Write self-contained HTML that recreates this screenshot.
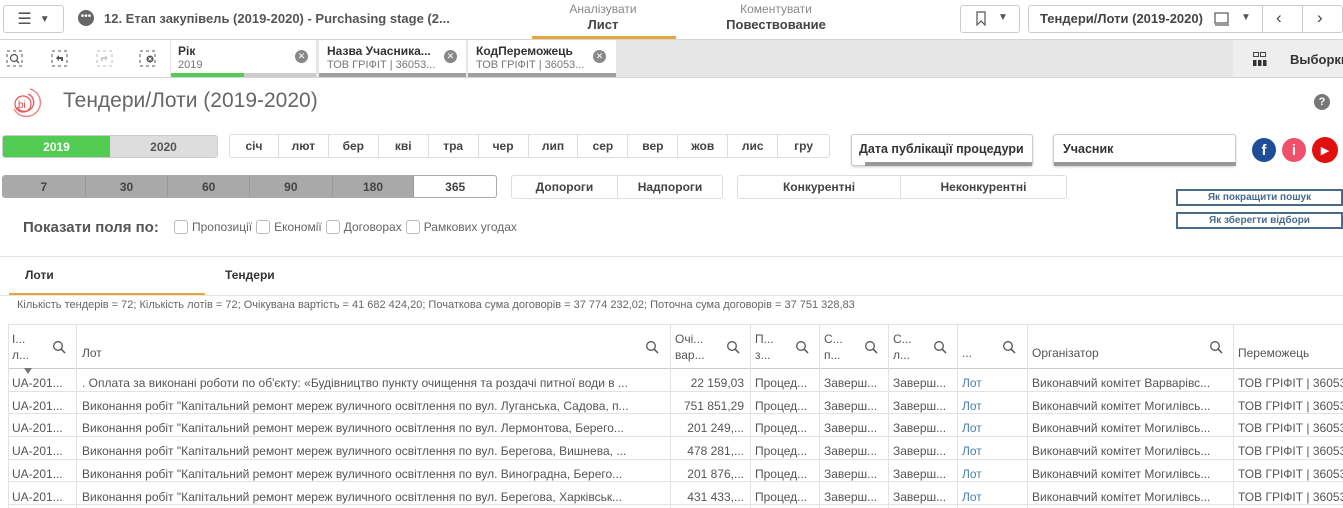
<!DOCTYPE html>
<html><head><meta charset="utf-8"><style>
*{box-sizing:border-box;margin:0;padding:0}
body{width:1343px;height:508px;overflow:hidden;background:#fff;font-family:"Liberation Sans","DejaVu Sans",sans-serif;color:#333;position:relative;font-size:12px}
.a{position:absolute}
.btn{position:absolute;border:1px solid #ccc;border-radius:3px;background:#fff}
.c{display:flex;align-items:center;justify-content:center}
.seg{position:absolute;display:flex;border:1px solid #ddd;border-radius:3px;overflow:hidden}
.seg div{display:flex;align-items:center;justify-content:center;border-right:1px solid #ddd;font-weight:bold;font-size:12px;color:#444;height:100%}
.seg div:last-child{border-right:none}
.cell{position:absolute;font-size:12px;color:#555;white-space:nowrap;overflow:hidden}
.vl{position:absolute;width:1px;background:#e2e2e2}
.hl{position:absolute;height:1px;background:#e2e2e2;left:8px;right:0}
.cb{display:inline-block;width:14px;height:14px;border:1px solid #bbb;border-radius:3px;vertical-align:-3px;margin:0 4px 0 4px}
.mg{position:absolute;width:14px;height:14px}
</style></head><body>
<svg width="0" height="0" style="position:absolute"><defs><symbol id="mg" viewBox="0 0 14 14"><circle cx="6" cy="6" r="4.3" fill="none" stroke="#555" stroke-width="1.3"/><line x1="9.2" y1="9.2" x2="13" y2="13" stroke="#555" stroke-width="1.5"/></symbol></defs></svg>
<!-- top bar -->
<div class="btn c" style="left:3px;top:5px;width:61px;height:28px;font-size:16px;color:#555">☰ <span style="font-size:10px;margin-left:8px">▼</span></div>
<div class="a" style="left:78px;top:10px;width:16px;height:16px;border-radius:8px;background:#666;color:#fff;font-size:10px;line-height:13px;text-align:center">•••</div>
<div class="a" style="left:104px;top:11px;font-size:13px;font-weight:bold;color:#555">12. Етап закупівель (2019-2020) - Purchasing stage (2...</div>
<div class="a" style="left:532px;top:2px;width:142px;text-align:center;font-size:12px;color:#888">Аналізувати</div>
<div class="a" style="left:532px;top:17px;width:142px;text-align:center;font-size:13px;font-weight:bold;color:#444">Лист</div>
<div class="a" style="left:532px;top:36px;width:144px;height:3px;background:#e5a63b"></div>
<div class="a" style="left:705px;top:2px;width:142px;text-align:center;font-size:12px;color:#888">Коментувати</div>
<div class="a" style="left:705px;top:17px;width:142px;text-align:center;font-size:13px;font-weight:bold;color:#444">Повествование</div>
<div class="btn" style="left:960px;top:5px;width:60px;height:28px"></div>
<svg class="a" style="left:976px;top:11px" width="10" height="15" viewBox="0 0 10 15"><path d="M1 1H9V14L5 10L1 14Z" fill="none" stroke="#555" stroke-width="1.2"/></svg>
<div class="a" style="left:998px;top:12px;font-size:10px;color:#555">▼</div>
<div class="btn" style="left:1028px;top:5px;width:315px;height:28px"></div>
<div class="a" style="left:1040px;top:11px;font-size:13px;font-weight:bold;color:#444">Тендери/Лоти (2019-2020)</div>
<svg class="a" style="left:1214px;top:12px" width="16" height="14" viewBox="0 0 16 14"><rect x="1" y="1" width="13" height="10" fill="none" stroke="#555" stroke-width="1.2"/><line x1="1" y1="13" x2="15" y2="13" stroke="#555" stroke-width="1.2"/></svg>
<div class="a" style="left:1241px;top:12px;font-size:10px;color:#555">▼</div>
<div class="a" style="left:1262px;top:6px;width:1px;height:27px;background:#ccc"></div>
<div class="a" style="left:1302px;top:6px;width:1px;height:27px;background:#ccc"></div>
<div class="a" style="left:1276px;top:8px;font-size:17px;color:#444">‹</div>
<div class="a" style="left:1317px;top:8px;font-size:17px;color:#444">›</div>
<!-- selection bar -->
<div class="a" style="left:0;top:39px;width:1343px;height:39px;background:#e6e6e6;border-top:1px solid #d4d4d4;border-bottom:1px solid #d4d4d4"></div>
<div class="a" style="left:0;top:40px;width:170px;height:37px;background:#fff"></div>
<svg class="a" style="left:6px;top:50px" width="18" height="18" viewBox="0 0 18 18"><rect x="1" y="1" width="15" height="15" fill="none" stroke="#555" stroke-dasharray="3 3"/><circle cx="8" cy="8" r="3.5" fill="none" stroke="#555" stroke-width="1.2"/><line x1="10.5" y1="10.5" x2="13" y2="13" stroke="#555" stroke-width="1.3"/></svg>
<svg class="a" style="left:51px;top:50px" width="18" height="18" viewBox="0 0 18 18"><rect x="1" y="1" width="15" height="15" fill="none" stroke="#555" stroke-dasharray="3 3"/><path d="M5 8L8 5V7H12V11H10V9H8V11Z" fill="#555"/></svg>
<svg class="a" style="left:96px;top:50px" width="18" height="18" viewBox="0 0 18 18"><rect x="1" y="1" width="15" height="15" fill="none" stroke="#bbb" stroke-dasharray="3 3"/><path d="M12 8L9 5V7H5V11H7V9H9V11Z" fill="#ccc"/></svg>
<svg class="a" style="left:139px;top:50px" width="18" height="18" viewBox="0 0 18 18"><rect x="1" y="1" width="15" height="15" fill="none" stroke="#555" stroke-dasharray="3 3"/><circle cx="11" cy="9" r="3.5" fill="#555"/><path d="M9.5 7.5L12.5 10.5M12.5 7.5L9.5 10.5" stroke="#fff"/></svg>
<div class="a" style="left:171px;top:40px;width:145px;height:37px;background:#fff"></div>
<div class="a" style="left:178px;top:44px;font-size:12px;font-weight:bold;color:#333">Рік</div>
<div class="a" style="left:178px;top:59px;font-size:11px;color:#777">2019</div>
<div class="a" style="left:171px;top:73px;width:73px;height:4px;background:#52cc52"></div>
<div class="a" style="left:244px;top:73px;width:72px;height:4px;background:#ccc"></div>
<div class="a" style="left:319px;top:40px;width:147px;height:37px;background:#fff"></div>
<div class="a" style="left:327px;top:44px;font-size:12px;font-weight:bold;color:#333">Назва Учасника...</div>
<div class="a" style="left:327px;top:59px;font-size:11px;color:#777">ТОВ ГРІФІТ | 36053...</div>
<div class="a" style="left:319px;top:73px;width:147px;height:4px;background:#a0a0a0"></div>
<div class="a" style="left:468px;top:40px;width:148px;height:37px;background:#fff"></div>
<div class="a" style="left:476px;top:44px;font-size:12px;font-weight:bold;color:#333">КодПереможець</div>
<div class="a" style="left:476px;top:59px;font-size:11px;color:#777">ТОВ ГРІФІТ | 36053...</div>
<div class="a" style="left:468px;top:73px;width:148px;height:4px;background:#a0a0a0"></div>
<div class="a c" style="left:295px;top:50px;width:13px;height:13px;border-radius:7px;background:#888;color:#fff;font-size:9px">✕</div>
<div class="a c" style="left:444px;top:50px;width:13px;height:13px;border-radius:7px;background:#888;color:#fff;font-size:9px">✕</div>
<div class="a c" style="left:593px;top:50px;width:13px;height:13px;border-radius:7px;background:#888;color:#fff;font-size:9px">✕</div>
<div class="a" style="left:1233px;top:40px;width:110px;height:37px;background:#eee"></div>
<svg class="a" style="left:1253px;top:52px" width="14" height="14" viewBox="0 0 14 14"><rect x="0.5" y="0.5" width="5" height="4" fill="none" stroke="#444"/><rect x="7.5" y="0.5" width="5" height="4" fill="none" stroke="#444"/><rect x="0" y="8" width="3.5" height="6" fill="#333"/><rect x="5" y="8" width="3.5" height="6" fill="#333"/><rect x="10" y="8" width="3.5" height="6" fill="#333"/></svg>
<div class="a" style="left:1290px;top:52px;font-size:13px;font-weight:bold;color:#333">Выборки</div>
<!-- title -->
<svg class="a" style="left:8px;top:85px" width="36" height="34" viewBox="0 0 36 34"><path d="M22 4A14 14 0 1 1 6 24" fill="none" stroke="#e88" stroke-width="1.5"/><path d="M20 9A9 9 0 1 1 9 22" fill="none" stroke="#e66" stroke-width="1.5"/><circle cx="15" cy="19" r="8" fill="none" stroke="#d55" stroke-width="1.2"/><text x="10" y="23" font-size="10" fill="#d44" font-family="Liberation Sans">bi</text></svg>
<div class="a" style="left:63px;top:89px;font-size:21px;color:#666">Тендери/Лоти (2019-2020)</div>
<div class="a c" style="left:1314px;top:94px;width:16px;height:16px;border-radius:8px;background:#777;color:#fff;font-size:11px;font-weight:bold">?</div>
<!-- year -->
<div class="seg" style="left:2px;top:135px;width:216px;height:23px;border-color:#ccc">
<div style="width:108px;background:#52cc52;color:#fff;border-right:none">2019</div><div style="width:108px;background:#ddd;color:#555">2020</div></div>
<div class="seg" style="left:229px;top:134px;width:601px;height:24px">
<div style="width:49px">січ</div><div style="width:50px">лют</div><div style="width:50px">бер</div><div style="width:50px">кві</div><div style="width:50px">тра</div><div style="width:50px">чер</div><div style="width:50px">лип</div><div style="width:50px">сер</div><div style="width:50px">вер</div><div style="width:50px">жов</div><div style="width:50px">лис</div><div style="width:51px">гру</div></div>
<div class="btn" style="left:851px;top:134px;width:182px;height:32px;box-shadow:0 1px 2px #ccc"></div>
<div class="a" style="left:859px;top:142px;font-size:12.5px;font-weight:bold;color:#333">Дата публікації процедури</div>
<div class="a" style="left:865px;top:162px;width:167px;height:4px;background:#999"></div>
<div class="btn" style="left:1053px;top:134px;width:183px;height:32px;box-shadow:0 1px 2px #ccc"></div>
<div class="a" style="left:1063px;top:142px;font-size:12.5px;font-weight:bold;color:#333">Учасник</div>
<div class="a" style="left:1054px;top:162px;width:182px;height:4px;background:#999"></div>
<div class="a c" style="left:1252px;top:138px;width:24px;height:24px;border-radius:12px;background:#1f4e99;color:#fff;font-weight:bold;font-size:15px">f</div>
<div class="a c" style="left:1282px;top:138px;width:24px;height:24px;border-radius:12px;background:#f0506a;color:#fff;font-weight:bold;font-size:15px">i</div>
<div class="a c" style="left:1312px;top:137px;width:26px;height:26px;border-radius:13px;background:#e01010;color:#fff;font-size:11px">▶</div>
<!-- days -->
<div class="seg" style="left:2px;top:175px;width:495px;height:23px;border-color:#aaa">
<div style="width:83px;background:#a9a9a9;border-color:#999">7</div><div style="width:83px;background:#a9a9a9;border-color:#999">30</div><div style="width:82px;background:#a9a9a9;border-color:#999">60</div><div style="width:83px;background:#a9a9a9;border-color:#999">90</div><div style="width:82px;background:#a9a9a9;border-color:#999">180</div><div style="width:82px">365</div></div>
<div class="seg" style="left:511px;top:175px;width:212px;height:24px"><div style="width:107px">Допороги</div><div style="width:105px">Надпороги</div></div>
<div class="seg" style="left:737px;top:175px;width:330px;height:24px"><div style="width:164px">Конкурентні</div><div style="width:166px">Неконкурентні</div></div>
<div class="a c" style="left:1176px;top:189px;width:167px;height:17px;border:2px solid #4a6a8a;font-size:10px;font-weight:bold;color:#4a6a8a">Як покращити пошук</div>
<div class="a c" style="left:1176px;top:212px;width:167px;height:17px;border:2px solid #4a6a8a;font-size:10px;font-weight:bold;color:#4a6a8a">Як зберегти відбори</div>
<div class="a" style="left:23px;top:219px;font-size:15px;font-weight:bold;color:#555">Показати поля по:</div>
<div class="a" style="left:170px;top:220px;font-size:12px;color:#666"><span class="cb"></span>Пропозиції<span class="cb"></span>Економії<span class="cb"></span>Договорах<span class="cb"></span>Рамкових угодах</div>
<!-- tabs -->
<div class="a" style="left:0;top:256px;width:1343px;height:1px;background:#e4e4e4"></div>
<div class="a" style="left:25px;top:268px;font-size:12px;font-weight:bold;color:#333">Лоти</div>
<div class="a" style="left:225px;top:268px;font-size:12px;font-weight:bold;color:#333">Тендери</div>
<div class="a" style="left:9px;top:293px;width:196px;height:2px;background:#e5a63b"></div>
<div class="a" style="left:0;top:295px;width:1343px;height:1px;background:#e4e4e4"></div>
<div class="a" style="left:17px;top:299px;font-size:11px;color:#666">Кількість тендерів = 72; Кількість лотів = 72; Очікувана вартість = 41 682 424,20; Початкова сума договорів = 37 774 232,02; Поточна сума договорів = 37 751 328,83</div>
<!-- table -->
<div class="hl" style="top:324px"></div><div class="hl" style="top:368px;background:#ccc"></div>
<div class="hl" style="top:391px"></div><div class="hl" style="top:413px"></div><div class="hl" style="top:436px"></div><div class="hl" style="top:459px"></div><div class="hl" style="top:481px"></div><div class="hl" style="top:504px"></div>
<div class="vl" style="left:8px;top:324px;height:184px"></div>
<div class="vl" style="left:76px;top:324px;height:184px"></div>
<div class="vl" style="left:670px;top:324px;height:184px"></div>
<div class="vl" style="left:750px;top:324px;height:184px"></div>
<div class="vl" style="left:819px;top:324px;height:184px"></div>
<div class="vl" style="left:888px;top:324px;height:184px"></div>
<div class="vl" style="left:957px;top:324px;height:184px"></div>
<div class="vl" style="left:1027px;top:324px;height:184px"></div>
<div class="vl" style="left:1233px;top:324px;height:184px"></div>
<!-- headers -->
<div class="cell" style="left:12px;top:331px;line-height:16px">I...<br>л...</div>
<div class="cell" style="left:82px;top:346px">Лот</div>
<div class="cell" style="left:675px;top:331px;line-height:16px">Очі...<br>вар...</div>
<div class="cell" style="left:755px;top:331px;line-height:16px">П...<br>з...</div>
<div class="cell" style="left:824px;top:331px;line-height:16px">С...<br>п...</div>
<div class="cell" style="left:893px;top:331px;line-height:16px">С...<br>л...</div>
<div class="cell" style="left:962px;top:346px">...</div>
<div class="cell" style="left:1032px;top:346px">Організатор</div>
<div class="cell" style="left:1238px;top:346px">Переможець</div>
<svg class="mg" style="left:52px;top:340px"><use href="#mg"/></svg>
<svg class="mg" style="left:645px;top:340px"><use href="#mg"/></svg>
<svg class="mg" style="left:726px;top:340px"><use href="#mg"/></svg>
<svg class="mg" style="left:795px;top:340px"><use href="#mg"/></svg>
<svg class="mg" style="left:864px;top:340px"><use href="#mg"/></svg>
<svg class="mg" style="left:933px;top:340px"><use href="#mg"/></svg>
<svg class="mg" style="left:1002px;top:340px"><use href="#mg"/></svg>
<svg class="mg" style="left:1209px;top:340px"><use href="#mg"/></svg>
<div class="a" style="left:24px;top:368px;width:0;height:0;border-left:4px solid transparent;border-right:4px solid transparent;border-top:6px solid #777"></div>
<!-- rows -->
<div class="cell" style="left:12px;top:372px;line-height:22.7px">UA-201...<br>UA-201...<br>UA-201...<br>UA-201...<br>UA-201...<br>UA-201...</div>
<div class="cell" style="left:82px;top:372px;line-height:22.7px;width:585px">. Оплата за виконані роботи по об'єкту: «Будівництво пункту очищення та роздачі питної води в ...<br>Виконання робіт "Капітальний ремонт мереж вуличного освітлення по вул. Луганська, Садова, п...<br>Виконання робіт "Капітальний ремонт мереж вуличного освітлення по вул. Лермонтова, Берего...<br>Виконання робіт "Капітальний ремонт мереж вуличного освітлення по вул. Берегова, Вишнева, ...<br>Виконання робіт "Капітальний ремонт мереж вуличного освітлення по вул. Виноградна, Берего...<br>Виконання робіт "Капітальний ремонт мереж вуличного освітлення по вул. Берегова, Харківськ...</div>
<div class="cell" style="left:672px;top:372px;line-height:22.7px;width:72px;text-align:right">22 159,03<br>751 851,29<br>201 249,...<br>478 281,...<br>201 876,...<br>431 433,...</div>
<div class="cell" style="left:755px;top:372px;line-height:22.7px">Процед...<br>Процед...<br>Процед...<br>Процед...<br>Процед...<br>Процед...</div>
<div class="cell" style="left:824px;top:372px;line-height:22.7px">Заверш...<br>Заверш...<br>Заверш...<br>Заверш...<br>Заверш...<br>Заверш...</div>
<div class="cell" style="left:893px;top:372px;line-height:22.7px">Заверш...<br>Заверш...<br>Заверш...<br>Заверш...<br>Заверш...<br>Заверш...</div>
<div class="cell" style="left:962px;top:372px;line-height:22.7px;color:#4a7fa8">Лот<br>Лот<br>Лот<br>Лот<br>Лот<br>Лот</div>
<div class="cell" style="left:1032px;top:372px;line-height:22.7px">Виконавчий комітет Варварівс...<br>Виконавчий комітет Могилівсь...<br>Виконавчий комітет Могилівсь...<br>Виконавчий комітет Могилівсь...<br>Виконавчий комітет Могилівсь...<br>Виконавчий комітет Могилівсь...</div>
<div class="cell" style="left:1238px;top:372px;line-height:22.7px">ТОВ ГРІФІТ | 36053<br>ТОВ ГРІФІТ | 36053<br>ТОВ ГРІФІТ | 36053<br>ТОВ ГРІФІТ | 36053<br>ТОВ ГРІФІТ | 36053<br>ТОВ ГРІФІТ | 36053</div>
</body></html>
